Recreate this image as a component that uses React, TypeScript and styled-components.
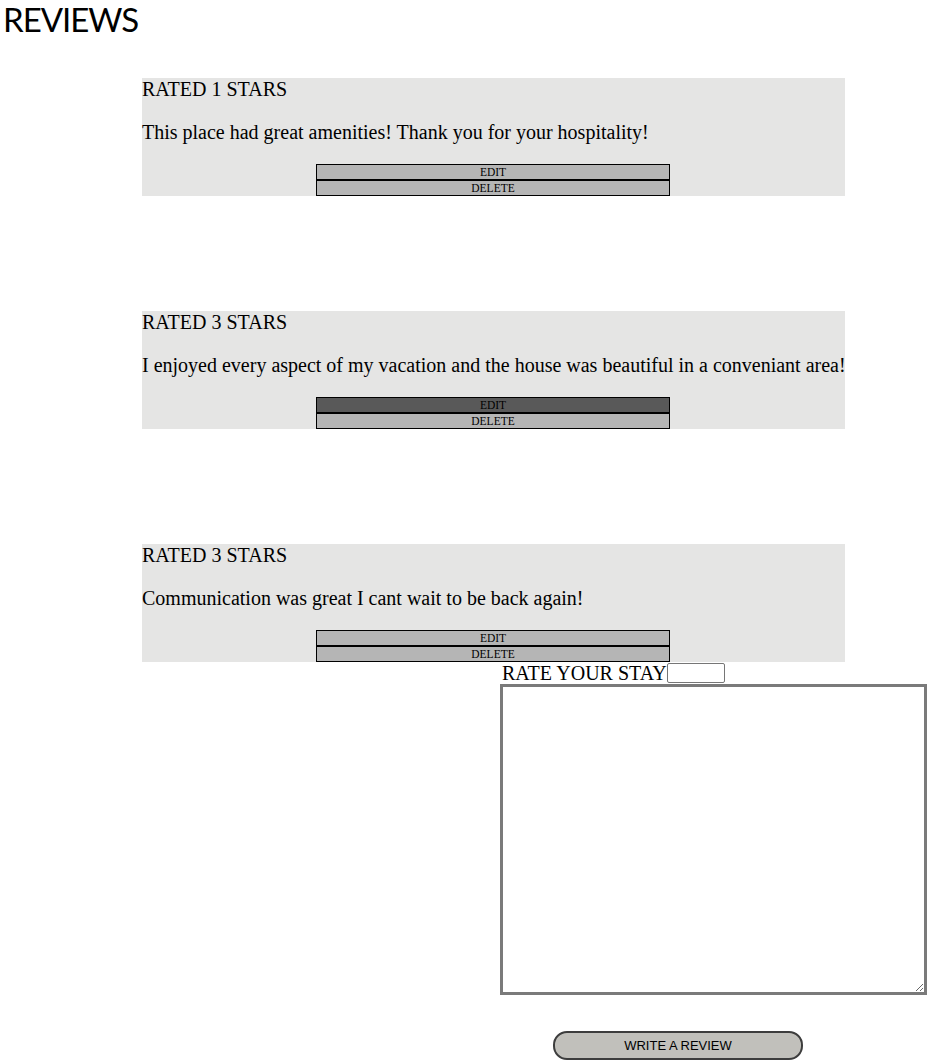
import { styled, createGlobalStyle } from "styled-components";

const reviews = [
  { id: 1, stars: 1, text: "This place had great amenities! Thank you for your hospitality!" },
  { id: 2, stars: 3, text: "I enjoyed every aspect of my vacation and the house was beautiful in a conveniant area!", hot: true },
  { id: 3, stars: 3, text: "Communication was great I cant wait to be back again!" },
];

const App = () => {
  return (
    <Page>
      <GlobalStyle />
      <Title>REVIEWS</Title>
      <ReviewList>
        {reviews.map((r) => (
          <Card key={r.id}>
            <Rating>RATED {r.stars} STARS</Rating>
            <Body>{r.text}</Body>
            <SmallButton $dark={r.hot}>EDIT</SmallButton>
            <SmallButton>DELETE</SmallButton>
          </Card>
        ))}
      </ReviewList>
      <Form onSubmit={(e) => e.preventDefault()}>
        <LabelRow>
          RATE YOUR STAY
          <StarsInput type="text" />
        </LabelRow>
        <TextBox />
        <SubmitButton type="submit">WRITE A REVIEW</SubmitButton>
      </Form>
    </Page>
  );
};

const GlobalStyle = createGlobalStyle`
  html, body {
    margin: 0;
    padding: 0;
    background: #ffffff;
    overflow: hidden;
  }
  body {
    font-family: "Liberation Serif", "Times New Roman", serif;
    color: #000000;
  }
`;

const Page = styled.div`
  width: 936px;
  height: 1060px;
`;

const Title = styled.h1`
  margin: 0;
  padding: 0 0 0 3px;
  font-family: Lato, "Open Sans", sans-serif;
  font-weight: 400;
  font-size: 33px;
  line-height: 38px;
  letter-spacing: -1px;
`;

const ReviewList = styled.div`
  display: flex;
  flex-direction: column;
  gap: 115px;
  margin-top: 40px;
  padding-left: 142px;
`;

const Card = styled.div`
  width: 703px;
  background: #e5e5e4;
  font-size: 20px;
`;

const Rating = styled.div`
  line-height: 23px;
`;

const Body = styled.p`
  margin: 20px 0;
  line-height: 23px;
  white-space: nowrap;
`;

const SmallButton = styled.button<{ $dark?: boolean }>`
  display: block;
  width: 354px;
  height: 16px;
  margin: 0 0 0 174px;
  padding: 0;
  border: 1px solid #000000;
  background: ${({ $dark }) => ($dark ? "#595959" : "#b5b5b5")};
  font-family: "Liberation Serif", "Times New Roman", serif;
  font-size: 11.5px;
  line-height: 14px;
  color: #000000;
`;

const Form = styled.form`
  display: flex;
  flex-direction: column;
  align-items: flex-start;
  margin-left: 500px;
  width: 427px;
`;

const LabelRow = styled.label`
  display: flex;
  align-items: flex-end;
  height: 22px;
  padding-left: 2px;
  font-size: 20px;
  line-height: 22px;
`;

const StarsInput = styled.input`
  box-sizing: border-box;
  width: 58px;
  height: 20px;
  margin: 0 0 1px 0;
  border: 1px solid #767676;
  border-radius: 2px;
  background: #ffffff;
`;

const TextBox = styled.textarea`
  box-sizing: border-box;
  width: 427px;
  height: 311px;
  margin: 0;
  border: 3px solid #7a7a7a;
  background: #ffffff;
`;

const SubmitButton = styled.button`
  box-sizing: border-box;
  width: 250px;
  height: 29px;
  margin: 36px 0 0 53px;
  border: 2px solid #3d3d3d;
  border-radius: 14px;
  background: #c1c0bb;
  font-family: "Liberation Sans", Arial, sans-serif;
  font-size: 13px;
  color: #000000;
`;

export default App;
